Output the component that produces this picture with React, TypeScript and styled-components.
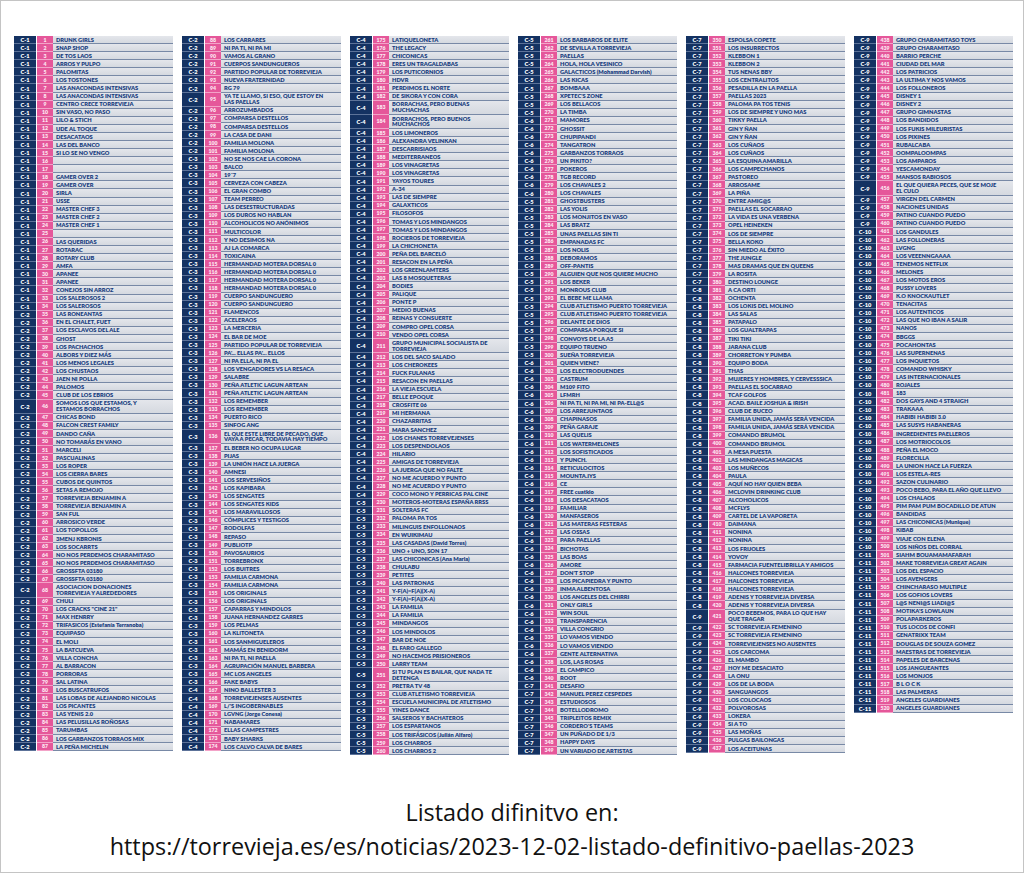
import React from 'react';
import styled, { createGlobalStyle } from 'styled-components';

const GlobalStyle = createGlobalStyle`
  html, body {
    margin: 0;
    padding: 0;
    background: #ffffff;
  }
  body {
    font-family: Lato, "Liberation Sans", sans-serif;
  }
`;

const Frame = styled.div`
  width: 1024px;
  height: 873px;
  box-sizing: border-box;
  border: 1px solid #c4c4c4;
  background: #ffffff;
  display: flex;
  flex-direction: column;
`;

const Tables = styled.div`
  display: flex;
  align-items: flex-start;
  gap: 9px;
  padding: 35px 0 0 13px;
  height: 760px;
  box-sizing: border-box;
`;

const Column = styled.div`
  width: 159px;
  display: flex;
  flex-direction: column;
`;

const Row = styled.div<{ $double?: boolean }>`
  display: grid;
  grid-template-columns: 23px 16px 1fr;
  height: ${(p) => (p.$double ? '14.2px' : '8.09px')};
  font-weight: 800;
  font-size: 5.7px;
`;

const Label = styled.div`
  background: #143262;
  color: #ffffff;
  display: flex;
  align-items: center;
  justify-content: center;
  border-bottom: 1px solid #5d7399;
  box-sizing: border-box;
  margin-right: 1px;
`;

const Num = styled.div`
  background: #e5579a;
  color: #fde8f2;
  display: flex;
  align-items: center;
  justify-content: center;
  border-bottom: 1px solid #f3a3c8;
  box-sizing: border-box;
  font-size: 5.2px;
`;

const Name = styled.div<{ $double?: boolean }>`
  background: linear-gradient(#e4e6eb, #d5d9e0);
  color: #183d80;
  display: flex;
  align-items: center;
  padding-left: 3px;
  border-bottom: 1px solid #7889a6;
  box-sizing: border-box;
  white-space: ${(p) => (p.$double ? 'pre-line' : 'nowrap')};
  line-height: 5.8px;
  overflow: hidden;
`;

const Footer = styled.div`
  display: flex;
  flex-direction: column;
  align-items: center;
  padding-top: 34px;
  font-family: "Open Sans", "Liberation Sans", sans-serif;
  font-size: 23.4px;
  line-height: 34px;
  color: #111111;
`;

const FooterLine = styled.div`
  white-space: nowrap;
`;

const columns: { start: number; names: string[] }[] = [
  {
    start: 1,
    names: [
      'DRUNK GIRLS', 'SNAP SHOP', 'DE TOS LAOS', 'ARROS Y PULPO', 'PALOMITAS', 'LOS TOSTONES',
      'LAS ANACONDAS INTENSIVAS', 'LAS ANACONDAS INTENSIVAS', 'CENTRO CRECE TORREVIEJA', 'SIN VASO, NO PASO',
      'LILO & STICH', 'UDE AL TOQUE', 'DESACATAOS', 'LAS DEL BANCO', 'SI LO SE NO VENGO', '', '',
      'GAMER OVER 2', 'GAMER OVER', 'SIRLA', 'USSE', 'MASTER CHEF 3', 'MASTER CHEF 2', 'MASTER CHEF 1', '',
      'LAS QUERIDAS', 'ROTARAC', 'ROTARY CLUB', 'AMFA', 'APANEE', 'APANEE', 'CONEJOS SIN ARROZ',
      'LOS SALEROSOS 2', 'LOS SALEROSOS', 'LAS RONEANTAS', 'EN EL CHALET, FUET', 'LOS ESCLAVOS DEL ALE',
      'GHOST', 'LOS PACHACHOS', 'ALBORS Y DIEZ MÁS', 'LOS MENOS LEGALES', 'LOS CHUSTAOS', 'JAEN NI POLLA',
      'PALOMOS', 'CLUB DE LOS EBRIOS', 'SOMOS LOS QUE ESTAMOS, Y\nESTAMOS BORRACHOS', 'CHICAS BOND',
      'FALCON CREST FAMILY', 'DANDO CAÑA', 'NO TOMARÁS EN VANO', 'MARCELI', 'PASCUALINAS', 'LOS ROPER',
      'LOS CIERRA BARES', 'CUBOS DE QUINTOS', 'SETAS A REMOJO', 'TORREVIEJA BENJAMIN A',
      'TORREVIEJA BENJAMIN A', 'SAN FUL', 'ARROSICO VERDE', 'LOS TOPOLLOS', '3MENJ KBRONIS', 'LOS SOCARRTS',
      'NO NOS PERDEMOS CHARAMITASO', 'NO NOS PERDEMOS CHARAMITASO', 'GROSSFTA 03180', 'GROSSFTA 03180',
      'ASOCIACION DONACIONES\nTORREVIEJA Y ALREDEDORES', 'CHULI', 'LOS CRACKS "CINE 21"', 'MAX HENRRY',
      'TRIFASICOS (Estefanía Terranoba)', 'EQUIPASO', 'EL MOLI', 'LA BATCUEVA', 'VILLA CONCHA',
      'AL BARRACON', 'PORRORAS', 'SAL LATINA', 'LOS BUSCATRUFOS', 'LAS LOBAS DE ALEJANDRO NICOLAS',
      'LOS PICANTES', 'LAS YENIS 2.0', 'LAS PELUSILLAS ROÑOSAS', 'TARUMBAS', 'LOS GARBANZOS TORRAOS MIX',
      'LA PEÑA MICHELIN',
    ],
  },
  {
    start: 88,
    names: [
      'LOS CARRARES', 'NI PA TI, NI PA MI', 'VAMOS AL GRANO', 'CUERPOS SANDUNGUEROS',
      'PARTIDO POPULAR DE TORREVIEJA', 'NUEVA FRATERNIDAD', 'RG 79',
      'YA TE LLAMO, SI ESO, QUE ESTOY EN\nLAS PAELLAS', 'ARROZUMBADOS', 'COMPARSA DESTELLOS',
      'COMPARSA DESTELLOS', 'LA CASA DE DANI', 'FAMILIA MOLONA', 'FAMILIA MOLONA', 'NO SE NOS CAE LA CORONA',
      'BALCO', '19´7', 'CERVEZA CON CABEZA', 'EL GRAN COMBO', 'TEAM PERREO', 'LAS DESESTRUCTURADAS',
      'LOS DUROS NO HABLAN', 'ALCOHOLICOS NO ANÓNIMOS', 'MULTICOLOR', 'Y NO DESIMOS NA', 'AJ LA COMARCA',
      'TOXICAINA', 'HERMANDAD MOTERA DORSAL 0', 'HERMANDAD MOTERA DORSAL 0', 'HERMANDAD MOTERA DORSAL 0',
      'HERMANDAD MOTERA DORSAL 0', 'CUERPO SANDUNGUERO', 'CUERPO SANDUNGUERO', 'FLAMENCOS', 'ACELERAOS',
      'LA MERCERIA', 'EL BAR DE MOE', 'PARTIDO POPULAR DE TORREVIEJA', "PA'... ELLAS PA'... ELLOS",
      'NI PA ELLA, NI PA EL', 'LOS VENGADORES VS LA RESACA', 'SALABRE', 'PEÑA ATLETIC LAGUN ARTEAN',
      'PEÑA ATLETIC LAGUN ARTEAN', 'LOS REMEMBER', 'LOS REMEMBER', 'PUERTO RICO', 'SINFOG ANG',
      'EL QUE ESTE LIBRE DE PECADO, QUE\nVAYA A PECAR, TODAVIA HAY TIEMPO', 'EL BEBER NO OCUPA LUGAR',
      'PIJAS', 'LA UNIÓN HACE LA JUERGA', 'AMNESI', 'LOS SERVESIÑOS', 'LOS KAPIBARA', 'LOS SENGATES',
      'LOS SENGATES KIDS', 'LOS MARAVILLOSOS', 'CÓMPLICES Y TESTIGOS', 'RODOLFAS', 'REPASO', 'PUBLIOTP',
      'PAVOSAURIOS', 'TORREBRONX', 'LOS BUITRES', 'FAMILIA CARMONA', 'FAMILIA CARMONA', 'LOS ORIGINALS',
      'LOS ORIGINALS', 'CAPARRAS Y MINDOLOS', 'JUANA HERNANDEZ GARRES', 'LOS PELMAS', 'LA KLITONETA',
      'LOS SANMIGUELEROS', 'MAMÁS EN BENIDORM', 'NI PA TI, NI PAELLA', 'AGRUPACIÓN MANUEL BARBERA',
      'MC LOS ANGELES', 'FAKE BABYS', 'NINO BALLESTER 3', 'TORREVIEJENSES AUSENTES', "L/'S INGOBERNABLES",
      'LGVNG (Jorge Conesa)', 'NABAMARES', 'ELLAS CAMPESTRES', 'BABY SHARKS', 'LOS CALVO CALVA DE BARES',
    ],
  },
  {
    start: 175,
    names: [
      'LATIQUELONETA', 'THE LEGACY', 'CHICONICAS', 'ERES UN TRAGALDABAS', 'LOS PUTICORNIOS', 'HDVR',
      'PERDIMOS EL NORTE', 'DE SIKORA Y CON CORA', 'BORRACHAS, PERO BUENAS\nMUCHACHAS',
      'BORRACHOS, PERO BUENOS\nMUCHACHOS', 'LOS LIMONEROS', 'ALEXANDRA VELINKAN', 'DESCARRISIAOS',
      'MEDITERRANEOS', 'LOS VINAGRETAS', 'LOS VINAGRETAS', 'YAYOS TOURES', 'A-34', 'LAS DE SIEMPRE',
      'GALAXTICOS', 'FILOSOFOS', 'TOMAS Y LOS MINDANGOS', 'TOMAS Y LOS MINDANGOS', 'ROCIEROS DE TORREVIEJA',
      'LA CHICHONETA', 'PEÑA DEL BARCELÓ', 'RESACON EN LA PEÑA', 'LOS GREENLAMTERS', 'LAS 8 MOSQUETERAS',
      'BODIES', 'PALIQUE', 'PONTE P', 'MEDIO BUENAS', 'REINAS Y CONSUERTE', 'COMPRO OPEL CORSA',
      'VENDO OPEL CORSA', 'GRUPO MUNICIPAL SOCIALISTA DE\nTORREVIEJA', 'LOS DEL SACO SALADO',
      'LOS CHEROKEES', 'FUCK FULANAS', 'RESACON EN PAELLAS', 'LA VIEJA ESCUELA', 'BELLE EPOQUE',
      'CROSFITE 06', 'MI HERMANA', 'CHAZARRITAS', 'MARA SANCHEZ', 'LOS CHANES TORREVEJENSES',
      'LOS DESPENDOLAOS', 'HILARIO', 'AMIGAS DE TORREVIEJA', 'LA JUERGA QUE NO FALTE', 'NO ME ACUERDO Y PUNTO',
      'NO ME ACUERDO Y PUNTO', 'COCO MONO Y PERRICAS PAL CINE', 'MOTEROS-MOTERAS ESPAÑA RRSS', 'SOLTERAS FC',
      'PALOMA PA TOS', 'MILINGUIS ENFOLLONAOS', 'EN WUIKIMAU', 'LAS CASADAS (David Torres)',
      'UNO + UNO, SON 17', 'LAS CHICONICAS (Ana Maria)', 'CHULABU', 'PETITES', 'LAS PATRONAS',
      'Y-F(A)=F(A)(X-A)', 'Y-F(A)=F(A)(X-A)', 'LA FAMILIA', 'LA FAMILIA', 'MINDANGOS', 'LOS MINDOLOS',
      'BAR DE NOE', 'EL FARO GALLEGO', 'NO HACEMOS PRISIONEROS', 'LARRY TEAM',
      'SI TU PLAN ES BAILAR, QUE NADA TE\nDETENGA', 'PRETRA TV 48', 'CLUB ATLETISMO TORREVIEJA',
      'ESCUELA MUNICIPAL DE ATLETISMO', 'YINES DANCE', 'SALSEROS Y BACHATEROS', 'LOS ESPARTANOS',
      'LOS TRIFÁSICOS (Julián Alfaro)', 'LOS CHARROS', 'LOS CHARROS 2',
    ],
  },
  {
    start: 261,
    names: [
      'LOS BARBAROS DE ELITE', 'DE SEVILLA A TORREVIEJA', 'PAELLAS', 'HOLA, HOLA VESINICO',
      'GALACTICOS (Mohammad Darvish)', 'LAS KICAS', 'BOMBAAA', "XPETEC'S ZONE", 'LOS BELLACOS', 'LA TIMBA',
      'MAMORES', 'GHOSSIT', 'CHUPIPANDI', 'TANGATRON', 'GARBANZOS TORRAOS', 'UN PIKITO?', 'POKEROS',
      'TGB RECORD', 'LOS CHAVALES 2', 'LOS CHAVALES', 'GHOSTBUSTERS', 'LAS YOLIS', 'LOS MONJITOS EN VASO',
      'LAS BRATZ', 'UNAS PAELLAS SIN TI', 'EMPANADAS FC', 'LOS NOLIS', 'DEBORAMOS', 'OFF-PANTIS',
      'ALGUIEN QUE NOS QUIERE MUCHO', 'LOS BEKER', 'MONROUS CLUB', 'EL BEBE ME LLAMA',
      'CLUB ATLETISMO PUERTO TORREVIEJA', 'CLUB ATLETISMO PUERTO TORREVIEJA', 'DELANTE DE DIOS',
      'COMPARSA PORQUE SI', 'CONVOYS DE LA A5', 'EQUIPO TRUENO', 'SUEÑA TORREVIEJA', 'QUIEN VIENE?',
      'LOS ELECTRODUENDES', 'CASTRUM', 'M109 FITO', 'LFMRH', 'NI PA TI, NI PA MI, NI PA-ELL@S',
      'LOS ARREJUNTAOS', 'CHAPINASOS', 'PEÑA GARAJE', 'LAS QUELIS', 'LOS WATERMELONES', 'LOS SOFISTICADOS',
      'Y PUNCH.', 'RETICULOCITOS', 'MOUNTA.IYS', 'CE', 'FREE cuatkio', 'LOS DESACATAOS', 'FAMILIAR',
      'MANFASEROS', 'LAS MATERAS FESTERAS', 'LAS OSSAS', 'PARA PAELLAS', 'BICHOTAS', 'LAS BOAS', 'AMORE',
      "DON'T STOP", 'LOS PICAPIEDRA Y PUNTO', 'INMA ALBENTOSA', 'LOS ANGELES DEL CHIRRI', 'ONLY GIRLS',
      'WIN SOUL', 'TRANSPARENCIA', 'VILLA CONGRIO', 'LO VAMOS VIENDO', 'LO VAMOS VIENDO', 'GENTE ALTERNATIVA',
      'LOS, LAS ROSAS', 'EL CAMPICO', 'ROOT', 'DESAFIO', 'MANUEL PEREZ CESPEDES', 'ESTUDIOSOS',
      'BOTELLODROMO', 'TRIPLEITOS REMIX', "CORDERO'S TEAMS", 'UN PUÑADO DE 1/3', 'HAPPY DAYS',
      'UN VARIADO DE ARTISTAS',
    ],
  },
  {
    start: 350,
    names: [
      'ESPOLSA COPETE', 'LOS INSURRECTOS', 'KLEBBON 1', 'KLEBBON 2', 'TUS NENAS BBY', 'LOS CENTRALITOS',
      'PESADILLA EN LA PAELLA', 'PAELLAS 2023', 'PALOMA PA TOS TENIS', 'LOS DE SIEMPRE Y UNO MAS',
      'TIKKY PAELLA', 'GIN Y ÑAN', 'GIN Y ÑAN', 'LOS CUÑAOS', 'LOS CUÑAOS', 'LA ESQUINA AMARILLA',
      'LOS CAMPECHANOS', 'PASTOREO', 'ARROSAME', 'LA PIÑA', 'ENTRE AMIG@S', 'PAELLAS EL SOCARRAO',
      'LA VIDA ES UNA VERBENA', 'OPEL HEINEKEN', 'LOS DE SIEMPRE', 'BELLA KOKO', 'SIN MIEDO AL ÉXITO',
      'THE JUNGLE', 'MAS DRAMAS QUE EN QUEENS', 'LA ROSITA', 'DESTINO LOUNGE', 'A CA ORTI', 'OCHENTA',
      'LOS LOKIS DEL MOLINO', 'LAS SALAS', 'PATAPALO', 'LOS GUALTRAPAS', 'TIKI TIKI', 'JARANA CLUB',
      'CHORRETON Y PUMBA', 'EQUIPO BODA', 'THAS', 'MUJERES Y HOMBRES, Y CERVESSSICA', 'PAELLAS EL SOCARRAO',
      'TCAF GOLFOS', 'ACAD. BAILE JOSHUA & IRISH', 'CLUB DE BUCEO', 'FAMILIA UNIDA, JAMÁS SERÁ VENCIDA',
      'FAMILIA UNIDA, JAMÁS SERÁ VENCIDA', 'COMANDO BRUMOL', 'COMANDO BRUMOL', 'A MESA PUESTA',
      'LAS MINDANGAS MAGICAS', 'LOS MUÑECOS', 'PAULA', 'AQUÍ NO HAY QUIEN BEBA', 'MCLOVIN DRINKING CLUB',
      'ALCOHOLICOS', 'MCFLYS', 'CARTEL DE LA VAPORETA', 'DAIMANA', 'NONINA', 'NONINA', 'LOS FRIJOLES',
      'YOVOY', 'FARMACIA FUENTELIBRILLA Y AMIGOS', 'HALCONES TORREVIEJA', 'HALCONES TORREVIEJA',
      'HALCONES TORREVIEJA', 'ADENIS Y TORREVIEJA DIVERSA', 'ADENIS Y TORREVIEJA DIVERSA',
      'POCO BEBEMOS, PARA LO QUE HAY\nQUE TRAGAR', 'SC TORREVIEJA FEMENINO', 'SC TORREVIEJA FEMENINO',
      'TORREVIEJENSES NO AUSENTES', 'LOS CARCOMA', 'EL MAMBO', 'HOY ME DESACIATO', 'LA ONU',
      'LOS DE LA BODA', 'SANGUANGOS', 'LOS COLOCAOS', 'POLVOROSAS', 'LOKERA', 'SI A TO', 'LAS MOÑAS',
      'PULGAS BAILONGAS', 'LOS ACEITUNAS',
    ],
  },
  {
    start: 438,
    names: [
      'GRUPO CHARAMITASO TOYS', 'GRUPO CHARAMITASO', 'BARRIO PERCHE', 'CIUDAD DEL MAR', 'LOS PATRICIOS',
      'LA ULTIMA Y NOS VAMOS', 'LOS FOLLONEROS', 'DISNEY 1', 'DISNEY 2', 'GRUPO GIMNASTAS', 'LOS BANDIDOS',
      'LOS FUKIS MILEURISTAS', 'LOS PIXINES', 'RUBALCABA', 'OOMPALOOMPAS', 'LOS AMPAROS', 'YESCAMONDAY',
      'MANSOS RABIOSOS', 'EL QUE QUIERA PECES, QUE SE MOJE\nEL CULO', 'VIRGEN DEL CARMEN', 'NACIONES UNIDAS',
      'PATINO CUANDO PUEDO', 'PATINO CUANDO PUEDO', 'LOS GANDULES', 'LAS FOLLONERAS', 'LVGNG',
      'LOS VEEENNGAAAA', 'TENEMOS NETFLIX', 'MELONES', 'LOS MOTOS EROS', 'PUSSY LOVERS', 'K.O KNOCKAUTLET',
      'TENACITAS', 'LOS AUTENTICOS', 'LAS QUE NO IBAN A SALIR', 'NANOS', 'BBGGS', 'POCAHONTAS',
      'LAS SUPERNENAS', 'LOS INQUIETOS', 'COMANDO WHISKY', 'LAS INTERNACIONALES', 'ROJALES', '183',
      'DOS GAYS AND 4 STRAIGH', 'TRAKAAA', 'HABIBI HABIBI 3.0', 'LAS SUSYS HABANERAS',
      'INGREDIENTES PAELLEROS', 'LOS MOTRIOCOLOS', 'PEÑA EL MOCO', 'FLORECILLA', 'LA UNION HACE LA FUERZA',
      'LOS ESTELA-RES', 'SAZON CULINARIO', 'POCO BEBO, PARA EL AÑO QUE LLEVO', 'LOS CHALAOS',
      'PIM PAM PUM BOCADILLO DE ATUN', 'BANDIDAS', 'LAS CHICONICAS (Munique)', 'KIBAB', 'VIAJE CON ELENA',
      'LOS NIÑOS DEL CORRAL', 'SIAHM BOUAMAMAFARAH', 'MAKE TORREVIEJA GREAT AGAIN', 'LOS DEL ESPACIO',
      'LOS AVENGERS', 'CHINCHARASO MULTIPLE', 'LOS GOFIOS LOVERS', 'L@S NENI@S LIADI@S', "MOTIKA'S LOWLAUN",
      'POLAPARKEROS', 'TUS LOCOS DE CONFI', 'GENATRIXX TEAM', 'DOUGLAS DE SOUZA GOMEZ',
      'MAESTRAS DE TORREVIEJA', 'PAPELES DE BARCENAS', 'LOS JANGUEANTES', 'LOS MONJOS', 'B L O C K',
      'LAS PALMERAS', 'ANGELES GUARDIANES', 'ANGELES GUARDIANES',
    ],
  },
];

// cuadrante por número de parcela
const groupOf = (n: number): number => {
  if (n <= 34) return 1;
  if (n <= 101) return 2;
  if (n <= 166) return 3;
  if (n <= 229) return 4;
  if (n <= 270) return 5;
  if (n <= 280) return 6;
  if (n <= 300) return 5;
  if (n <= 340) return 6;
  if (n <= 380) return 7;
  if (n <= 420) return 8;
  if (n <= 460) return 9;
  if (n <= 500) return 10;
  return 11;
};

const App: React.FC = () => {
  return (
    <>
      <GlobalStyle />
      <Frame>
        <Tables>
          {columns.map((col) => (
            <Column key={col.start}>
              {col.names.map((name, i) => {
                const n = col.start + i;
                const double = name.includes('\n');
                return (
                  <Row key={n} $double={double}>
                    <Label>C-{groupOf(n)}</Label>
                    <Num>{n}</Num>
                    <Name $double={double}>{name}</Name>
                  </Row>
                );
              })}
            </Column>
          ))}
        </Tables>
        <Footer>
          <FooterLine>Listado difinitvo en:</FooterLine>
          <FooterLine>https://torrevieja.es/es/noticias/2023-12-02-listado-definitivo-paellas-2023</FooterLine>
        </Footer>
      </Frame>
    </>
  );
};

export default App;
